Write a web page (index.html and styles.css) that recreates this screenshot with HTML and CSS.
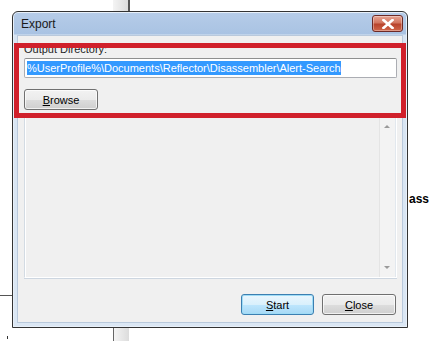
FILE: index.html
```html
<!DOCTYPE html>
<html>
<head>
	<title>Export</title>
	<link rel="stylesheet" href="styles.css">
</head>
<body>
	<div class="backdrop">
		<div class="bar bar-top"></div>
		<div class="bar bar-bottom"></div>
		<div class="rule-left"></div>
		<span class="peek">ass</span>
		<span class="tick"></span>
	</div>

	<div class="window">
		<div class="titlebar">
			<span class="title">Export</span>
			<button class="close-x" type="button" aria-label="Close">
				<svg width="12" height="10" viewBox="0 0 12 10">
					<path d="M1.5 1 L10.5 9 M10.5 1 L1.5 9" stroke="#fff" stroke-width="2.6" stroke-linecap="square"/>
				</svg>
			</button>
		</div>

		<div class="client">
			<label class="field-label" for="output-dir">Output Directory:</label>
			<div class="textbox" id="output-dir"><span class="selected">%UserProfile%\Documents\Reflector\Disassembler\Alert-Search</span></div>

			<button class="btn browse" type="button"><u>B</u>rowse</button>

			<div class="listbox">
				<div class="scroll">
					<span class="arrow up"></span>
					<span class="arrow down"></span>
				</div>
			</div>

			<div class="actions">
				<button class="btn default" type="button"><u>S</u>tart</button>
				<button class="btn" type="button"><u>C</u>lose</button>
			</div>
		</div>
	</div>

	<!-- highlight drawn over the dialog -->
	<div class="highlight"></div>
</body>
</html>
```

FILE: styles.css
```css
html, body {
	margin: 0;
	padding: 0;
}
body {
	position: relative;
	width: 429px;
	height: 341px;
	overflow: hidden;
	padding: 11px 0 0 12px;
	box-sizing: border-box;
	background-color: white;
	font-family: 'Liberation Sans', Arial, sans-serif;
	font-size: 11px;
	color: #000;
}

/* things behind the dialog */
.backdrop .bar {
	position: absolute;
	left: 113px;
	width: 15px;
	background: linear-gradient(to right, #f4f4f4, #dcdcdc);
}
.bar-top {
	top: 0;
	height: 11px;
	border-right: 2px solid #555;
}
.bar-bottom {
	top: 327px;
	height: 14px;
	border-left: 1px solid #666;
}
.rule-left {
	position: absolute;
	left: 0;
	top: 295px;
	width: 12px;
	height: 1px;
	background: #555;
}
.peek {
	position: absolute;
	left: 409px;
	top: 192px;
	font-weight: bold;
	font-size: 12px;
}
.tick {
	position: absolute;
	left: 7px;
	top: 336px;
	width: 1px;
	height: 3px;
	background: #333;
}

/* dialog window */
.window {
	position: relative;
	display: flex;
	flex-direction: column;
	width: 396px;
	height: 317px;
	box-sizing: border-box;
	padding: 0 4px 4px 4px;
	border: 1px solid #333;
	border-radius: 6px 6px 0 0;
	background: linear-gradient(#b6cce8 0, #a9c3e3 22px, #d7e4f2 23px, #dbe7f4 100%);
	box-shadow: inset 0 0 0 1px #e8f0f9;
}
.titlebar {
	display: flex;
	justify-content: space-between;
	align-items: flex-start;
	height: 23px;
}
.title {
	padding: 5px 0 0 4px;
	font-size: 12px;
	color: #1a1a1a;
}
.close-x {
	display: flex;
	align-items: center;
	justify-content: center;
	margin-top: 3px;
	width: 31px;
	height: 17px;
	padding: 0;
	border: 1px solid #6d2a26;
	border-radius: 3px;
	background: linear-gradient(#e8a493 0, #d2755f 45%, #b8432c 55%, #d1664a 100%);
	box-shadow: inset 0 0 0 1px rgba(255,255,255,.35);
}

.client {
	flex: 1;
	display: flex;
	flex-direction: column;
	padding: 6px 5px 0 6px;
	background-color: #f0f0f0;
	border: 1px solid #b9c9dc;
}
.field-label {
	display: block;
	line-height: 15px;
	color: #1e1e1e;
}
.textbox {
	margin-top: 1px;
	height: 20px;
	box-sizing: border-box;
	padding: 2px 2px;
	line-height: 14px;
	background: white;
	border: 1px solid #abadb3;
	border-top-color: #8e8f8f;
	border-radius: 2px;
	white-space: nowrap;
	overflow: hidden;
}
.selected {
	display: inline-block;
	color: white;
	background-color: #3399ff;
}

.btn {
	height: 21px;
	width: 74px;
	padding: 0;
	font-family: inherit;
	font-size: 11px;
	color: #000;
	border: 1px solid #707070;
	border-radius: 3px;
	background: linear-gradient(#f2f2f2 0, #ebebeb 50%, #dddddd 51%, #cfcfcf 100%);
	box-shadow: inset 0 0 0 1px rgba(255,255,255,.7);
}
.btn u {
	text-decoration: underline;
}
.browse {
	margin-top: 11px;
}
.btn.default {
	width: 73px;
	border-color: #3c7fb1;
	background: linear-gradient(#eaf6fd 0, #d9f0fc 50%, #bee6fd 51%, #a7d9f5 100%);
	box-shadow: inset 0 0 0 1px #9fdcf6;
}

.listbox {
	position: relative;
	margin-top: 6px;
	height: 160px;
	border: 1px solid #d3dbe3;
	border-right-color: #fff;
	border-bottom-color: #fff;
	box-shadow: inset 1px 1px 0 #fff, 0 1px 0 #cdd6e0;
	background-color: #f0f0f0;
}
.scroll {
	position: absolute;
	top: 0;
	right: 0;
	bottom: 0;
	width: 16px;
	background: #f3f3f3;
	border-left: 1px solid #e4e4e4;
	box-shadow: inset -1px 0 0 #e2e8ee;
}
.arrow {
	position: absolute;
	left: 4px;
	width: 0;
	height: 0;
	border-left: 3px solid transparent;
	border-right: 3px solid transparent;
}
.arrow.up {
	top: 8px;
	border-bottom: 3px solid #9a9a9a;
}
.arrow.down {
	bottom: 8px;
	border-top: 3px solid #9a9a9a;
}

.actions {
	display: flex;
	justify-content: flex-end;
	gap: 8px;
	margin-top: 16px;
	padding-right: 1px;
}

/* red annotation frame */
.highlight {
	position: absolute;
	left: 14px;
	top: 43px;
	width: 392px;
	height: 75px;
	box-sizing: border-box;
	border: 5px solid #d0202b;
}
```
